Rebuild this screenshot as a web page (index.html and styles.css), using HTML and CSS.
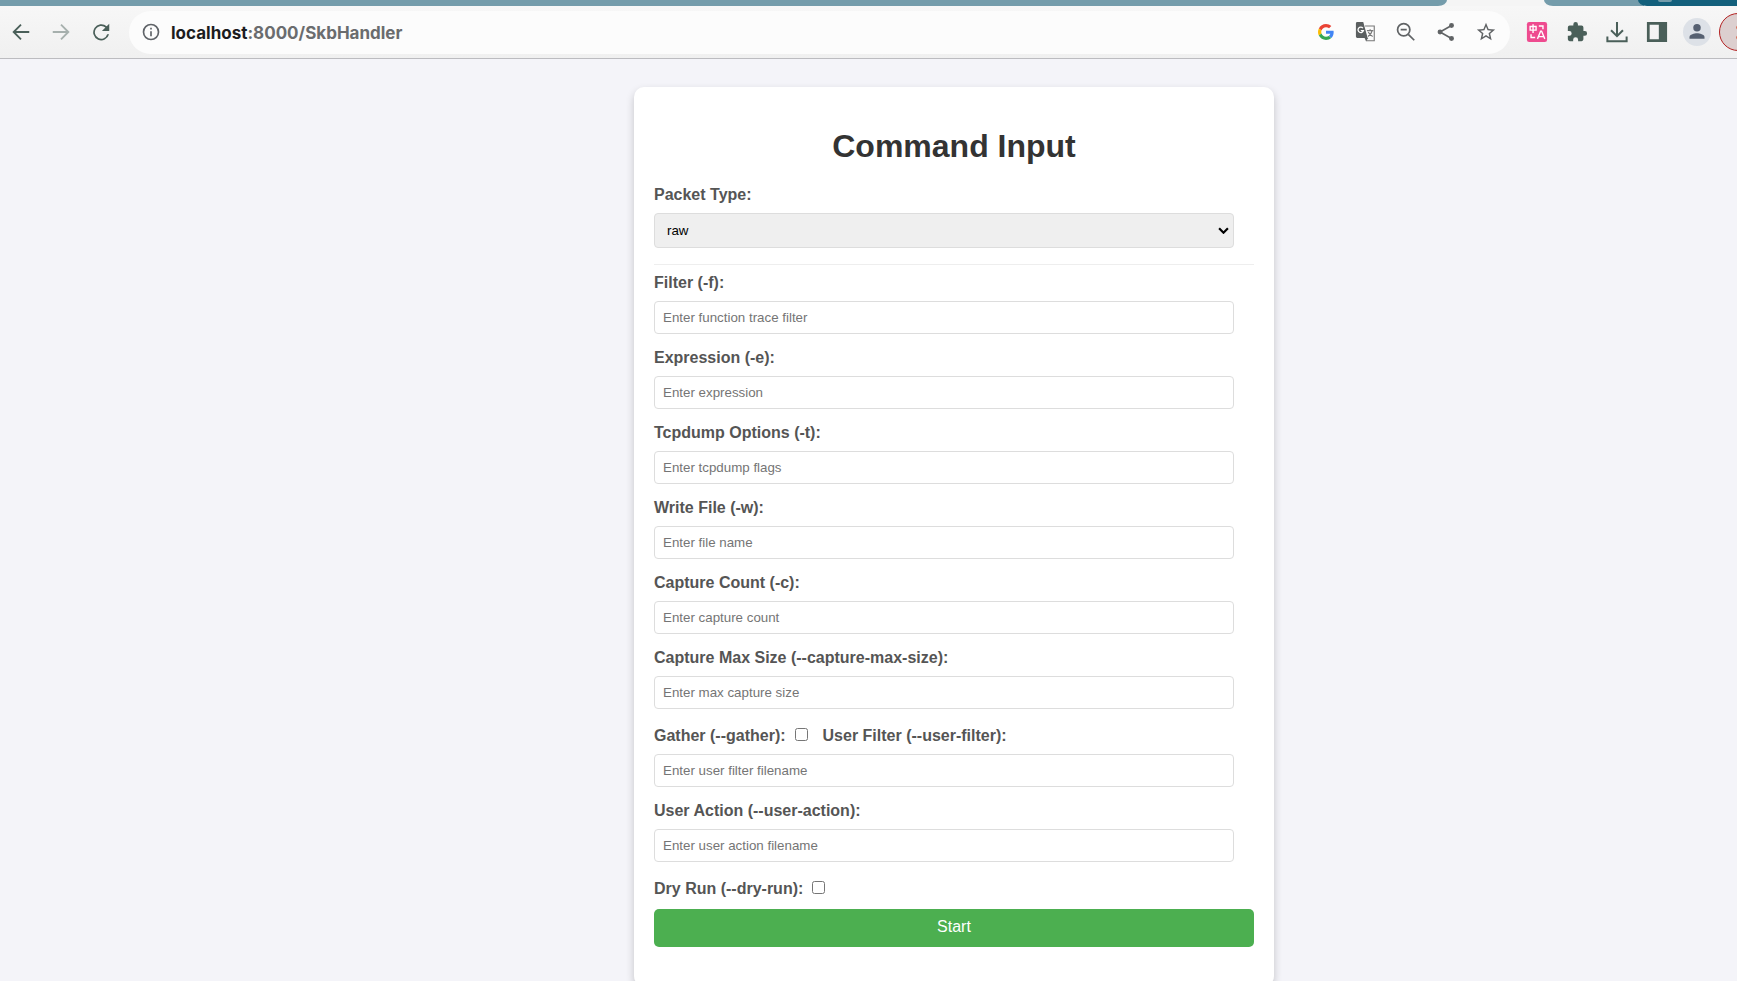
FILE: index.html
```html
<!DOCTYPE html>
<html lang="en">
<head>
<meta charset="utf-8">
<title>Command Input</title>
<link rel="stylesheet" href="styles.css">
</head>
<body>
<header class="browser">
  <div class="tabs">
    <div class="tab-left"></div>
    <div class="tab-active"></div>
    <div class="tab-right"></div>
    <div class="tab-rest"><span class="tab-dot"></span></div>
  </div>
  <div class="toolbar">
    <nav class="nav" aria-label="Navigation">
      <button class="icon" type="button" aria-label="Back"><svg viewBox="0 0 24 24" fill="none" stroke="#4a5f59" stroke-width="2"><path d="M21 12H4.500M12 4l-8 8 8 8"/></svg></button>
      <button class="icon dim" type="button" aria-label="Forward"><svg viewBox="0 0 24 24" fill="none" stroke="#4a5f59" stroke-width="2"><path d="M3 12h16.500M12 4l8 8-8 8"/></svg></button>
      <button class="icon" type="button" aria-label="Reload"><svg viewBox="0 0 24 24" fill="#4a5f59"><path d="M18.200 5.800A8.800 8.800 0 1 0 20.800 14.500h-2a6.900 6.900 0 1 1-2-7.300L13 11h8V3z"/></svg></button>
    </nav>
    <div class="address">
      <button class="icon site" type="button" aria-label="Site information"><svg viewBox="0 0 24 24" fill="#5f6368"><path d="M11 7h2v2h-2zm0 4h2v6h-2zm1-9a10 10 0 1 0 0 20 10 10 0 0 0 0-20zm0 18a8 8 0 1 1 0-16 8 8 0 0 1 0 16z"/></svg></button>
      <div class="url"><span class="host">localhost</span>:8000/SkbHandler</div>
      <div class="actions">
        <button class="icon google" type="button" aria-label="Search with Google"><svg viewBox="0 0 48 48"><path fill="#ea4335" d="M24 9.500c3.540 0 6.710 1.220 9.210 3.600l6.850-6.850C35.900 2.380 30.470 0 24 0 14.620 0 6.510 5.380 2.560 13.220l7.980 6.190C12.430 13.720 17.740 9.500 24 9.500z"/><path fill="#4285f4" d="M46.980 24.550c0-1.570-.15-3.090-.38-4.550H24v9.020h12.940c-.58 2.960-2.260 5.480-4.780 7.180l7.730 6c4.510-4.180 7.090-10.360 7.090-17.650z"/><path fill="#fbbc05" d="M10.530 28.590A14.500 14.500 0 0 1 9.770 24c0-1.600.27-3.140.76-4.590l-7.980-6.190A23.900 23.900 0 0 0 0 24c0 3.880.92 7.540 2.560 10.780z"/><path fill="#34a853" d="M24 48c6.480 0 11.930-2.130 15.890-5.810l-7.730-6c-2.150 1.450-4.920 2.300-8.160 2.300-6.260 0-11.570-4.220-13.470-9.910l-7.980 6.190C6.510 42.620 14.620 48 24 48z"/></svg></button>
        <button class="icon" type="button" aria-label="Translate page"><svg viewBox="0 0 24 24"><path d="M11 5.500h10v16H12" fill="#fbfbfb" stroke="#777" stroke-width="1.200"/><path d="M2.500 1H9l4.800 17.500H2.500A1.500 1.500 0 0 1 1 17V2.500A1.500 1.500 0 0 1 2.500 1z" fill="#5b5f60"/><path d="M13 10.500h7M16.500 9v1.500M18.700 10.500c-.5 3-2.500 5-4.500 6.500M14.500 12c1 2 2.500 3.800 4.800 5" fill="none" stroke="#777" stroke-width="1.300"/><path d="M8.600 7.700A3 3 0 1 0 9.200 10.500H6.300" fill="none" stroke="#fff" stroke-width="1.400"/><path d="m10.500 18.500 1.500 3.500 2.500-3.500z" fill="#5b5f60"/></svg></button>
        <button class="icon" type="button" aria-label="Zoomed out"><svg viewBox="0 0 24 24" fill="none" stroke="#606365" stroke-width="1.900"><circle cx="9.500" cy="9.500" r="6.700"/><path d="m14.500 14.500 6.500 6.500M6.200 9.500h6.600"/></svg></button>
        <button class="icon" type="button" aria-label="Share"><svg viewBox="0 0 24 24" fill="#606365"><path d="M18 5 5.500 12 18 19" fill="none" stroke="#606365" stroke-width="1.800"/><circle cx="18" cy="5" r="2.700"/><circle cx="5.500" cy="12" r="2.700"/><circle cx="18" cy="19" r="2.700"/></svg></button>
        <button class="icon" type="button" aria-label="Bookmark"><svg viewBox="0 0 24 24" fill="#606365"><path d="m22 9.240-7.190-.62L12 2 9.190 8.630 2 9.240l5.460 4.730L5.820 21 12 17.270 18.180 21l-1.630-7.030zM12 15.400l-3.760 2.270 1-4.280-3.320-2.880 4.380-.38L12 6.100l1.710 4.040 4.380.38-3.320 2.880 1 4.280z"/></svg></button>
      </div>
    </div>
    <div class="extensions">
      <button class="icon" type="button" aria-label="Translator"><svg viewBox="0 0 24 24"><rect x="1" y="1" width="22" height="22" rx="2.500" fill="#ee4b8f"/><path d="M4.500 6h6.500v4H4.500zM7.700 3.500V13M14 5.500h4.500V9M5.500 14.500V18H10M12.500 19.500 16 11h1l3.500 8.500M14 17h5" fill="none" stroke="#fff" stroke-width="1.500"/></svg></button>
      <button class="icon" type="button" aria-label="Extensions"><svg viewBox="0 0 24 24" fill="#4a5f59"><path d="M20.500 11H19V7a2 2 0 0 0-2-2h-4V3.500a2.500 2.500 0 0 0-5 0V5H4a2 2 0 0 0-2 2v3.800h1.500a2.700 2.700 0 0 1 0 5.400H2V20a2 2 0 0 0 2 2h3.800v-1.500a2.700 2.700 0 0 1 5.400 0V22H17a2 2 0 0 0 2-2v-4h1.500a2.500 2.500 0 0 0 0-5z"/></svg></button>
      <button class="icon" type="button" aria-label="Downloads"><svg viewBox="0 0 24 24" fill="none" stroke="#4a5f59" stroke-width="2.200"><path d="M12 1v15M5.500 10l6.500 6.500L18.500 10M1.500 17v5h21v-5"/></svg></button>
      <button class="icon" type="button" aria-label="Side panel"><svg viewBox="0 0 24 24" fill="#4a5f59" fill-rule="evenodd"><path d="M1 1h22v22H1zm3 3v16h10V4z"/></svg></button>
      <button class="icon profile" type="button" aria-label="Profile"><svg viewBox="0 0 24 24" fill="#566071"><circle cx="12" cy="7" r="4.500"/><path d="M3 20v-2c0-3 6-4.500 9-4.500s9 1.500 9 4.500v2z"/></svg></button>
      <button class="menu" type="button" aria-label="Menu"><svg viewBox="0 0 24 24" fill="#d9431e"><circle cx="12" cy="5" r="3"/><circle cx="12" cy="19" r="3"/></svg></button>
    </div>
  </div>
</header>
<main class="page">
  <form class="card">
    <h1 class="title">Command Input</h1>
    <div class="field">
      <label class="label" for="type">Packet Type:</label>
      <div class="select-wrap">
        <select class="control select" id="type"><option>raw</option></select>
        <svg class="chevron" viewBox="0 0 10 6" fill="none" stroke="#000" stroke-width="2"><path d="m1 1 4 4 4-4"/></svg>
      </div>
    </div>
    <hr class="divider">
    <div class="field">
      <label class="label" for="filter">Filter (-f):</label>
      <input class="control" id="filter" type="text" placeholder="Enter function trace filter">
    </div>
    <div class="field">
      <label class="label" for="expression">Expression (-e):</label>
      <input class="control" id="expression" type="text" placeholder="Enter expression">
    </div>
    <div class="field">
      <label class="label" for="tcpdump">Tcpdump Options (-t):</label>
      <input class="control" id="tcpdump" type="text" placeholder="Enter tcpdump flags">
    </div>
    <div class="field">
      <label class="label" for="file">Write File (-w):</label>
      <input class="control" id="file" type="text" placeholder="Enter file name">
    </div>
    <div class="field">
      <label class="label" for="count">Capture Count (-c):</label>
      <input class="control" id="count" type="text" placeholder="Enter capture count">
    </div>
    <div class="field">
      <label class="label" for="size">Capture Max Size (--capture-max-size):</label>
      <input class="control" id="size" type="text" placeholder="Enter max capture size">
    </div>
    <div class="field">
      <div class="checks">
        <label class="label" for="gather">Gather (--gather):</label>
        <input class="check" id="gather" type="checkbox">
        <label class="label" for="user-filter">User Filter (--user-filter):</label>
      </div>
      <input class="control" id="user-filter" type="text" placeholder="Enter user filter filename">
    </div>
    <div class="field">
      <label class="label" for="user-action">User Action (--user-action):</label>
      <input class="control" id="user-action" type="text" placeholder="Enter user action filename">
    </div>
    <div class="checks">
      <label class="label" for="dry-run">Dry Run (--dry-run):</label>
      <input class="check" id="dry-run" type="checkbox">
    </div>
    <button class="start" type="button">Start</button>
  </form>
</main>
</body>
</html>
```
FILE: styles.css
```css
* {
  box-sizing: border-box;
}

body {
  margin: 0;
  height: 100vh;
  overflow: hidden;
  background: #f4f4f9;
  font-family: "Liberation Sans", Arial, sans-serif;
}

/* Browser frame */
.tabs {
  display: flex;
  height: 6px;
  background: #f5f5f5;
}

.tab-left {
  flex: 1;
  background: #749cab;
  border-bottom-right-radius: 9px 6px;
}

.tab-active {
  width: 97px;
}

.tab-right {
  width: 100px;
  background: #749cab;
  border-bottom-left-radius: 9px 6px;
}

.tab-rest {
  width: 99px;
  margin-left: -6px;
  padding-left: 20px;
  background: #13607c;
  border-bottom-left-radius: 9px 6px;
}

.tab-dot {
  display: block;
  width: 14px;
  height: 2px;
  background: #749cab;
  border-radius: 0 0 7px 7px;
}

.toolbar {
  display: flex;
  align-items: center;
  height: 53px;
  padding-left: 9px;
  overflow: hidden;
  background: linear-gradient(#f7f7f7, #f0f0f0);
  border-bottom: 1px solid #bcbcc0;
}

.icon {
  display: flex;
  flex: none;
  width: 24px;
  height: 24px;
  padding: 1px;
  border: 0;
  background: none;
}

.icon svg {
  width: 100%;
  height: 100%;
}

.dim {
  opacity: 0.45;
}

.nav {
  display: flex;
  gap: 16px;
  padding-right: 16px;
}

.address {
  display: flex;
  flex: 1;
  align-items: center;
  height: 43px;
  padding: 0 12px 0 10px;
  border-radius: 22px;
  background: #fcfcfc;
}

.site {
  padding: 2px;
}

.url {
  flex: 1;
  padding: 2px 0 0 8px;
  color: #6a6c6e;
  font: 700 17px/24px Inter, sans-serif;
}

.host {
  color: #1c1c1e;
}

.actions {
  display: flex;
  gap: 16px;
}

.google {
  padding: 4px;
}

.extensions {
  display: flex;
  align-items: center;
  gap: 16px;
  padding-left: 15px;
}

.profile {
  width: 28px;
  height: 28px;
  margin: 0 -2px;
  padding: 4px;
  border-radius: 50%;
  background: #dde1e7;
}

.menu {
  display: grid;
  flex: none;
  place-items: center;
  width: 38px;
  height: 38px;
  margin-right: -20px;
  margin-left: -6px;
  padding: 0;
  border: 1px solid #b32020;
  border-radius: 50%;
  background: #dccfcf;
}

.menu svg {
  width: 17px;
}

.page {
  padding: 28px 0 40px 171px;
}

.card {
  max-width: 640px;
  margin: 0 auto;
  padding: 20px 20px 39px;
  border-radius: 10px;
  background: #fff;
  box-shadow: 0 4px 8px rgba(0, 0, 0, 0.2);
}

.title {
  margin: 21px 0;
  color: #333;
  font-size: 32px;
  line-height: 37px;
  text-align: center;
}

.field {
  display: flex;
  flex-direction: column;
  gap: 9px;
  margin-bottom: 15px;
}

.label {
  color: #555;
  font-size: 16px;
  font-weight: bold;
  line-height: 18px;
}

.control {
  margin-right: 20px;
  padding: 8px;
  border: 1px solid #ddd;
  border-radius: 4px;
  background: #fff;
  font-family: inherit;
  font-size: 13.333px;
  line-height: 15px;
}

.control::placeholder {
  color: #757575;
}

.select-wrap {
  position: relative;
  display: flex;
  margin-right: 20px;
}

.select {
  flex: 1;
  height: 35px;
  margin-right: 0;
  padding-left: 12px;
  background: #efefef;
  color: #000;
  appearance: none;
}

.chevron {
  position: absolute;
  top: 14px;
  right: 5px;
  width: 11px;
  height: 7px;
  pointer-events: none;
}

.divider {
  margin: 16px 0 9px;
  border: 0;
  border-top: 1px solid #eee;
}

.checks {
  display: flex;
  align-items: flex-start;
  padding-top: 3px;
}

.check {
  width: 13px;
  height: 13px;
  margin: 1px 15px 0 9px;
}

.start {
  width: 100%;
  margin-top: 11px;
  padding: 9px 10px 11px;
  border: 0;
  border-radius: 5px;
  background: #4caf50;
  color: #fff;
  font-family: inherit;
  font-size: 16px;
  line-height: 18px;
}
```
